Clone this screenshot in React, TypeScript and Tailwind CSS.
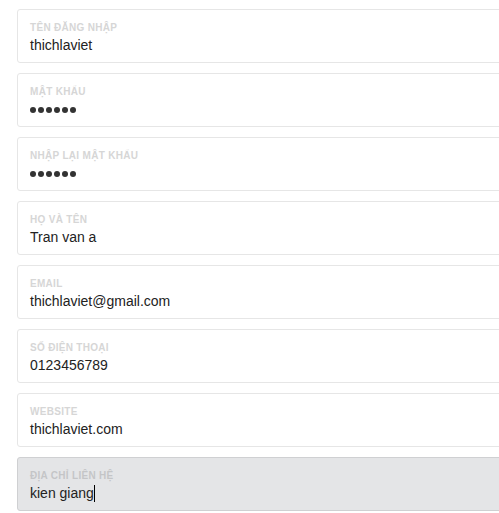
import React from "react";

const fields: { label: string; value: string; type?: "password" | "active" }[] = [
  { label: "Tên đăng nhập", value: "thichlaviet" },
  { label: "Mật khẩu", value: "", type: "password" },
  { label: "Nhập lại mật khẩu", value: "", type: "password" },
  { label: "Họ và tên", value: "Tran van a" },
  { label: "Email", value: "thichlaviet@gmail.com" },
  { label: "Số điện thoại", value: "0123456789" },
  { label: "Website", value: "thichlaviet.com" },
  { label: "Địa chỉ liên hệ", value: "kien giang", type: "active" },
];

export default function App() {
  return (
    <div
      className="w-[499px] h-[513px] overflow-hidden bg-white pt-[9px] pl-[17px]"
      style={{ fontFamily: '"Liberation Sans", Arial, sans-serif' }}
    >
      <div className="flex flex-col gap-[10px]">
        {fields.map((f) => {
          const active = f.type === "active";
          return (
            <div
              key={f.label}
              className={
                active
                  ? "w-[500px] h-[54px] rounded-[3px] border border-[#cfd0d2] bg-[#e4e5e7] px-[12px] pt-[12px]"
                  : "w-[500px] h-[54px] rounded-[3px] border border-[#e6e6e6] bg-white px-[12px] pt-[12px]"
              }
            >
              <div
                className={
                  active
                    ? "text-[10px] leading-[12px] font-bold uppercase tracking-[0.3px] text-[#c4c5c7]"
                    : "text-[10px] leading-[12px] font-bold uppercase tracking-[0.3px] text-[#d6d6d6]"
                }
              >
                {f.label}
              </div>
              {f.type === "password" ? (
                <div className="mt-[1px] h-[20px] flex items-center gap-[2px] pt-[2px]">
                  {[0, 1, 2, 3, 4, 5].map((i) => (
                    <span key={i} className="block w-[6px] h-[6px] rounded-full bg-[#333]" />
                  ))}
                </div>
              ) : (
                <div className="mt-[1px] h-[20px] text-[14px] leading-[20px] text-[#222] flex items-center">
                  <span>{f.value}</span>
                  {active && <span className="inline-block w-px h-[17px] bg-black" />}
                </div>
              )}
            </div>
          );
        })}
      </div>
    </div>
  );
}
